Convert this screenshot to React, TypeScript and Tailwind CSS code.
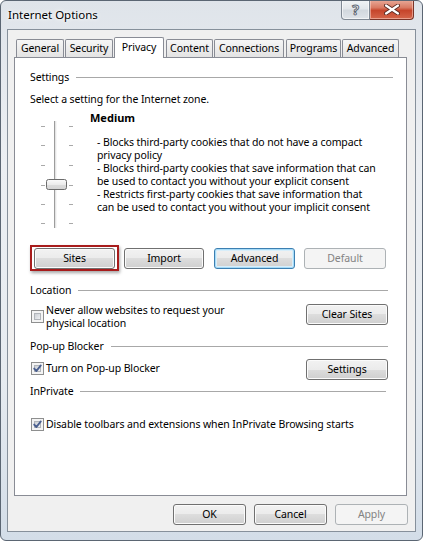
import React from "react";

type BtnProps = { label: string; className?: string; variant?: "normal" | "focus" | "disabled" };

function Btn({ label, className = "", variant = "normal" }: BtnProps) {
  if (variant === "disabled") {
    return (
      <div className={"h-[21px] shrink-0 rounded-[3px] border border-[#adb2b5] bg-[#f4f4f4] flex items-center justify-center text-[#838383] leading-none " + className}>
        {label}
      </div>
    );
  }
  if (variant === "focus") {
    return (
      <div className={"h-[21px] shrink-0 rounded-[3px] border border-[#3c7fb1] bg-[linear-gradient(#f2f2f2_0%,#ebebeb_50%,#dddddd_50%,#cfcfcf_100%)] shadow-[inset_0_0_0_1px_#a6dbf8,inset_0_0_0_2px_#d8eefa] flex items-center justify-center leading-none " + className}>
        {label}
      </div>
    );
  }
  return (
    <div className={"h-[21px] shrink-0 rounded-[3px] border border-[#707070] bg-[linear-gradient(#f2f2f2_0%,#ebebeb_50%,#dddddd_50%,#cfcfcf_100%)] shadow-[inset_0_0_0_1px_#fbfbfb] flex items-center justify-center leading-none " + className}>
      {label}
    </div>
  );
}

function Checkbox({ checked, className = "" }: { checked?: boolean; className?: string }) {
  return (
    <div className={"relative w-[13px] h-[13px] shrink-0 border border-[#8e8f8f] bg-[#f4f4f4] p-[2px] " + className}>
      <div className="w-full h-full border border-[#b1b5ba] bg-[linear-gradient(135deg,#cbcfd5_0%,#eef0f2_100%)]" />
      {checked && (
        <svg className="absolute left-[0px] top-[0px]" width="11" height="11" viewBox="0 0 11 11">
          <path d="M2.2 5.6 L4.4 8 L8.8 2.4" fill="none" stroke="#4a5f8f" strokeWidth="1.9" strokeLinecap="round" strokeLinejoin="round" />
        </svg>
      )}
    </div>
  );
}

function Group({ title, className = "", lineClass = "" }: { title: string; className?: string; lineClass?: string }) {
  return (
    <div className={"flex items-center h-[14px] leading-[14px] " + className}>
      <span className="whitespace-nowrap">{title}</span>
      <div className={"flex-1 h-px bg-[#a8a8a8] ml-[7px] " + lineClass} />
    </div>
  );
}

function Slider() {
  const ticks = [5.5, 24.5, 44.5, 64.5, 83.5, 102.5];
  return (
    <svg width="34" height="108" viewBox="0 0 34 108" className="shrink-0 ml-[10px] mt-[10px]">
      <defs>
        <linearGradient id="thumb" x1="0" y1="0" x2="0" y2="1">
          <stop offset="0" stopColor="#fbfbfb" />
          <stop offset="0.5" stopColor="#ececec" />
          <stop offset="0.55" stopColor="#dcdcdc" />
          <stop offset="1" stopColor="#d4d4d4" />
        </linearGradient>
      </defs>
      <rect x="14" y="0" width="3" height="107" fill="#e4e4e4" />
      <rect x="14" y="0" width="1" height="107" fill="#9c9c9c" />
      <rect x="16" y="0" width="1" height="107" fill="#f6f6f6" />
      {ticks.map((y) => (
        <g key={y}>
          <line x1="1" x2="5" y1={y} y2={y} stroke="#a9a9a9" strokeWidth="1" />
          <line x1="29" x2="33" y1={y} y2={y} stroke="#a9a9a9" strokeWidth="1" />
        </g>
      ))}
      <rect x="6.5" y="58.5" width="20" height="10" rx="2" fill="url(#thumb)" stroke="#6c6c6c" />
    </svg>
  );
}

const tabs = [
  { label: "General", cls: "w-[48px] ml-[8px]" },
  { label: "Security", cls: "w-[48px] ml-[1px]" },
  { label: "Privacy", cls: "w-[50px] ml-[1px]", selected: true },
  { label: "Content", cls: "w-[47px] ml-[2px]" },
  { label: "Connections", cls: "w-[70px] ml-[1px]" },
  { label: "Programs", cls: "w-[55px] ml-[2px]" },
  { label: "Advanced", cls: "w-[57px] ml-[1px]" },
];

export default function App() {
  return (
    <div className="w-[423px] h-[541px] font-['Noto_Sans',sans-serif] text-[10.5px] tracking-[-0.1px] text-black">
      <div className="w-[423px] h-[541px] flex flex-col rounded-[6px] border border-[#5b6673] bg-[linear-gradient(180deg,#dfe4ea_0%,#eceff3_30%,#e6ebf0_70%,#d3dde8_100%)] overflow-hidden">
        {/* Title bar */}
        <div className="h-[28px] flex items-start shrink-0">
          <div className="h-[28px] flex items-center pl-[7px] text-[11.5px] tracking-normal [text-shadow:0_0_6px_#ffffff,0_0_3px_#ffffff]">
            Internet Options
          </div>
          <div className="ml-auto mr-[8px] flex -mt-[1px]">
            <div className="w-[29px] h-[20px] rounded-bl-[4px] border border-[#7f8893] border-t-0 bg-[linear-gradient(#f2f4f6_0%,#e3e7eb_45%,#d2d8de_55%,#dfe4e9_100%)] shadow-[inset_0_0_0_1px_rgba(255,255,255,0.6)] flex items-center justify-center">
              <span className="text-[14px] font-bold leading-none text-white [-webkit-text-stroke:1px_#5e6672] mt-[1px]">?</span>
            </div>
            <div className="w-[44px] h-[20px] rounded-br-[4px] border border-[#7a3428] border-t-0 border-l-0 bg-[linear-gradient(#e9ab9a_0%,#d97a63_40%,#c6452b_55%,#d5664b_100%)] shadow-[inset_0_0_0_1px_rgba(255,220,210,0.5)] flex items-center justify-center">
              <svg width="16" height="11" viewBox="0 0 16 11">
                <path d="M2 1.5 L14 9.5 M14 1.5 L2 9.5" stroke="#5a2a22" strokeWidth="4" strokeLinecap="round" />
                <path d="M2 1.5 L14 9.5 M14 1.5 L2 9.5" stroke="#ffffff" strokeWidth="2.2" strokeLinecap="round" />
              </svg>
            </div>
          </div>
        </div>

        {/* Client area */}
        <div className="ml-[6px] w-[409px] h-[503px] border border-[#86909b] bg-[#f0f0f0] flex flex-col shrink-0">
          {/* Tabs */}
          <div className="relative z-10 mt-[7px] h-[21px] flex items-start">
            {tabs.map((t) =>
              t.selected ? (
                <div key={t.label} className={"h-[21px] border border-b-0 border-[#898c95] rounded-t-[2px] bg-white flex items-center justify-center pb-[1px] " + t.cls}>
                  {t.label}
                </div>
              ) : (
                <div key={t.label} className={"mt-[2px] h-[18px] border border-b-0 border-[#898c95] rounded-t-[2px] bg-[linear-gradient(#f6f6f6,#e3e3e3)] flex items-center justify-center " + t.cls}>
                  {t.label}
                </div>
              )
            )}
          </div>

          {/* Panel */}
          <div className="-mt-[1px] ml-[6px] w-[393px] h-[439px] border border-[#898c95] bg-white pl-[15px] pr-[18px] flex flex-col">
            <Group title="Settings" className="mt-[12px]" lineClass="-mr-[5px]" />
            <div className="mt-[8px] h-[14px] leading-[14px] whitespace-nowrap">Select a setting for the Internet zone.</div>
            <div className="mt-[5px] flex items-start">
              <Slider />
              <div className="ml-[16px] flex flex-col">
                <div className="font-bold h-[14px] leading-[14px] text-[11px] tracking-normal">Medium</div>
                <div className="mt-[11px] pl-[7px] leading-[13px] whitespace-nowrap">
                  <div>- Blocks third-party cookies that do not have a compact</div>
                  <div>privacy policy</div>
                  <div>- Blocks third-party cookies that save information that can</div>
                  <div>be used to contact you without your explicit consent</div>
                  <div>- Restricts first-party cookies that save information that</div>
                  <div>can be used to contact you without your implicit consent</div>
                </div>
              </div>
            </div>

            <div className="mt-[16px] h-[26px] flex items-center">
              <div className="w-[89px] h-[26px] border-2 border-[#a81c1c] flex items-center justify-center shadow-[1px_2px_3px_rgba(0,0,0,0.35)]">
                <Btn label="Sites" className="w-[81px]" />
              </div>
              <Btn label="Import" className="ml-[5px] w-[80px]" />
              <Btn label="Advanced" variant="focus" className="ml-[10px] w-[81px]" />
              <Btn label="Default" variant="disabled" className="ml-[9px] w-[82px]" />
            </div>

            <Group title="Location" className="mt-[12px]" />
            <div className="mt-[6px] flex items-start">
              <Checkbox className="ml-[1px] mt-[7px]" />
              <div className="ml-[2px] mt-[1px] leading-[13px] whitespace-nowrap">
                <div>Never allow websites to request your</div>
                <div>physical location</div>
              </div>
              <Btn label="Clear Sites" className="ml-auto mt-[1px] w-[82px]" />
            </div>

            <Group title="Pop-up Blocker" className="mt-[9px]" />
            <div className="mt-[6px] flex items-start">
              <Checkbox checked className="ml-[1px] mt-[3px]" />
              <div className="ml-[2px] mt-[3px] leading-[13px] whitespace-nowrap">Turn on Pop-up Blocker</div>
              <Btn label="Settings" className="ml-auto w-[82px]" />
            </div>

            <Group title="InPrivate" className="mt-[4px]" lineClass="mr-[2px]" />
            <div className="mt-[19px] flex items-start">
              <Checkbox checked className="ml-[1px] mt-[1px]" />
              <div className="ml-[2px] mt-[1px] leading-[13px] whitespace-nowrap">Disable toolbars and extensions when InPrivate Browsing starts</div>
            </div>
          </div>

          {/* Bottom buttons */}
          <div className="mt-[8px] mr-[7px] flex justify-end gap-[8px]">
            <Btn label="OK" className="w-[73px]" />
            <Btn label="Cancel" className="w-[73px]" />
            <Btn label="Apply" variant="disabled" className="w-[73px]" />
          </div>
        </div>
      </div>
    </div>
  );
}
